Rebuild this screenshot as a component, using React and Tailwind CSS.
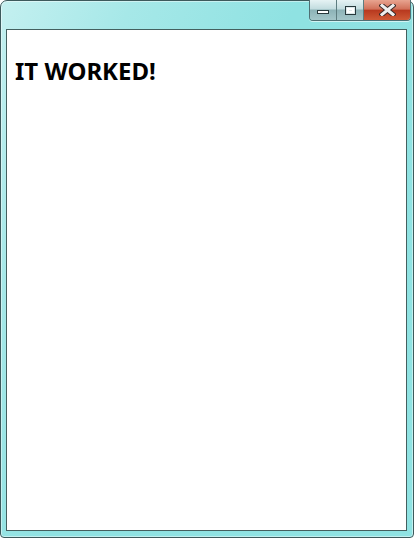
export default function App() {
    return (
        <div className="w-[414px] h-[538px] overflow-hidden bg-white">
            <div className="relative w-[414px] h-[538px] flex flex-col rounded-t-[7px] rounded-b-[4px] border border-[#3d5a5c] bg-[linear-gradient(115deg,#c4f0f0_0%,#a6e8e8_20%,#8fe2e2_45%,#8fe3e3_100%)] shadow-[inset_0_0_0_1px_rgba(255,255,255,0.45)]">
                {/* title bar */}
                <div className="h-[28px] flex justify-end items-start pr-[2px]">
                    <div className="flex -mt-px h-[21px] rounded-b-[4px] border border-t-0 border-[#4f6f73] overflow-hidden shadow-[0_1px_0_rgba(255,255,255,0.6)]">
                        <div className="w-[27px] h-full flex items-center justify-center bg-[linear-gradient(180deg,#e6f3f4_0%,#c2dcdf_45%,#8db3b7_50%,#a4c6c9_100%)] border-r border-[#5d7d80]">
                            <div className="mt-[4px] w-[12px] h-[4px] bg-white border border-[#27383b]" />
                        </div>
                        <div className="w-[27px] h-full flex items-center justify-center bg-[linear-gradient(180deg,#e6f3f4_0%,#c2dcdf_45%,#8db3b7_50%,#a4c6c9_100%)] border-r border-[#5d7d80]">
                            <div className="w-[11px] h-[9px] border border-[#27383b] flex items-center justify-center bg-[#dbe9ea]">
                                <div className="w-[7px] h-[5px] border-2 border-white border-t-[2px]" />
                            </div>
                        </div>
                        <div className="w-[46px] h-full flex items-center justify-center bg-[linear-gradient(180deg,#e8a490_0%,#d1715a_45%,#b8391f_52%,#cf5a36_100%)]">
                            <svg width="17" height="12" viewBox="0 0 17 12">
                                <path d="M3 1.5 L14 10.5 M14 1.5 L3 10.5" stroke="#3b2a28" strokeWidth="5" strokeLinecap="square" />
                                <path d="M3 1.5 L14 10.5 M14 1.5 L3 10.5" stroke="#eeeeee" strokeWidth="3" strokeLinecap="square" />
                            </svg>
                        </div>
                    </div>
                </div>
                {/* client area */}
                <div className="flex-1 ml-[5px] mr-[6px] mb-[6px] border border-[#44605f] bg-white">
                    <h1 className="mt-[26px] ml-[8px] text-[24px] leading-[30px] font-bold text-black font-['Segoe_UI','Noto_Sans','Open_Sans',sans-serif]">
                        IT WORKED!
                    </h1>
                </div>
            </div>
        </div>
    );
}
